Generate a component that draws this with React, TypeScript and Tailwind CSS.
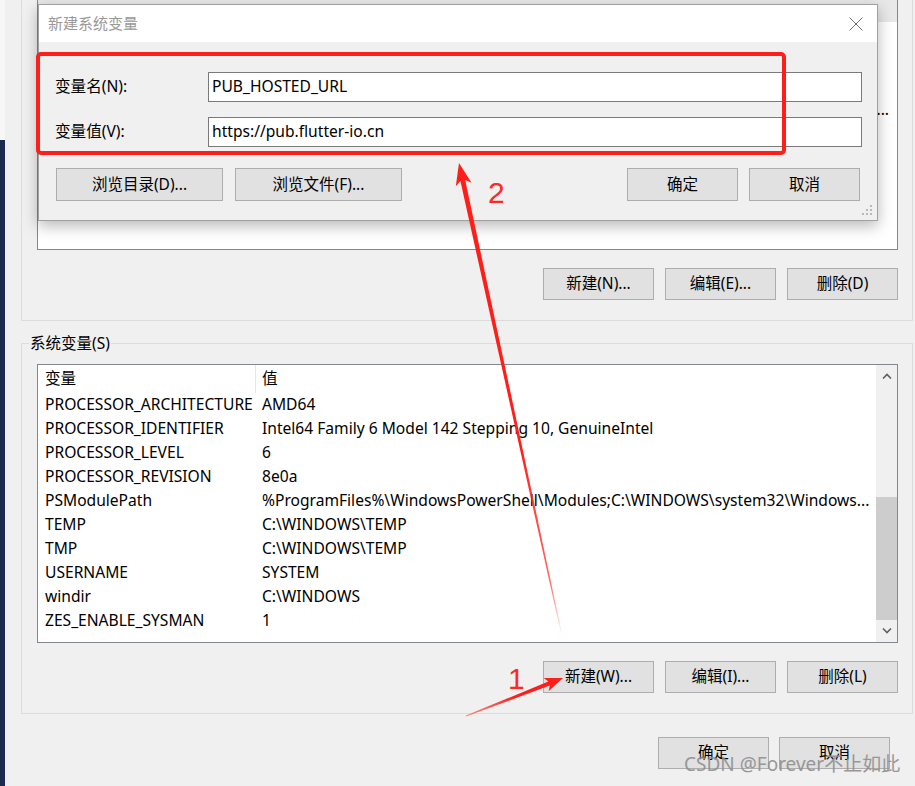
const rows: [string, string][] = [
  ["PROCESSOR_ARCHITECTURE", "AMD64"],
  ["PROCESSOR_IDENTIFIER", "Intel64 Family 6 Model 142 Stepping 10, GenuineIntel"],
  ["PROCESSOR_LEVEL", "6"],
  ["PROCESSOR_REVISION", "8e0a"],
  ["PSModulePath", "%ProgramFiles%\\WindowsPowerShell\\Modules;C:\\WINDOWS\\system32\\Windows..."],
  ["TEMP", "C:\\WINDOWS\\TEMP"],
  ["TMP", "C:\\WINDOWS\\TEMP"],
  ["USERNAME", "SYSTEM"],
  ["windir", "C:\\WINDOWS"],
  ["ZES_ENABLE_SYSMAN", "1"],
];

function WinButton({ label, className = "" }: { label: string; className?: string }) {
  return (
    <button
      type="button"
      className={`flex items-center justify-center border border-[#adadad] bg-[#e1e1e1] text-[15.5px] leading-none text-black ${className}`}
    >
      {label}
    </button>
  );
}

function Chevron({ up }: { up?: boolean }) {
  return (
    <svg width="10" height="6" viewBox="0 0 10 6" className="text-[#606060]">
      <path
        d={up ? "M1 5.5 L5 1.5 L9 5.5" : "M1 0.5 L5 4.5 L9 0.5"}
        fill="none"
        stroke="currentColor"
        strokeWidth="1.6"
      />
    </svg>
  );
}

function Annotations() {
  return (
    <svg
      className="pointer-events-none absolute left-0 top-0"
      width="915"
      height="786"
      viewBox="0 0 915 786"
    >
      <defs>
        <linearGradient id="fade2" x1="562" y1="636" x2="459" y2="163" gradientUnits="userSpaceOnUse">
          <stop offset="0" stopColor="#ff2a1f" stopOpacity="0" />
          <stop offset="0.12" stopColor="#ff2a1f" stopOpacity="0.7" />
          <stop offset="0.4" stopColor="#ff1f1a" stopOpacity="1" />
        </linearGradient>
        <linearGradient id="fade1" x1="466" y1="716" x2="563" y2="678" gradientUnits="userSpaceOnUse">
          <stop offset="0" stopColor="#ff2a1f" stopOpacity="0.5" />
          <stop offset="0.5" stopColor="#ff1f1a" stopOpacity="1" />
        </linearGradient>
      </defs>
      <rect x="38" y="54" width="746" height="99" rx="3" fill="none" stroke="#ff1f1a" strokeWidth="4" />
      <polygon
        points="459,163 471.5,182.8 465.2,180.1 562.5,635.9 561.5,636.1 460.4,181.1 455.8,186.2"
        fill="url(#fade2)"
      />
      <polygon
        points="563,678 548.8,691.1 549.7,685.4 466.2,716.5 465.8,715.5 548.3,681.6 543.7,678.1"
        fill="url(#fade1)"
      />
    </svg>
  );
}

export default function App() {
  return (
    <div className="relative flex h-[786px] w-[915px] overflow-hidden bg-[#f0f0f0] font-['Noto_Sans','Noto_Sans_CJK_SC',sans-serif] text-[15.6px] text-black">
      {/* desktop edge */}
      <div className="flex w-[5px] flex-col">
        <div className="h-[140px] bg-[#f7f7f7]" />
        <div className="flex-1 bg-[#1b2a4e]" />
      </div>

      <div className="flex flex-1 flex-col pl-[16px] pr-[2px]">
        {/* user variables */}
        <div className="flex h-[321px] flex-col border-x border-b border-[#dcdcdc] pl-[15px] pr-[14px]">
          <div className="flex h-[250px] flex-col border-x border-b border-[#828790] bg-white">
            <div className="h-[22px] bg-[#e8e8e8]" />
            <div className="mt-[76px] overflow-hidden whitespace-nowrap pr-[8px] text-right">
              %USERPROFILE%\AppData\Local\Microsoft\WindowsApps...
            </div>
          </div>
          <div className="mt-[18px] flex justify-end gap-[11px]">
            <WinButton label="新建(N)..." className="h-[32px] w-[111px]" />
            <WinButton label="编辑(E)..." className="h-[32px] w-[111px]" />
            <WinButton label="删除(D)" className="h-[32px] w-[111px]" />
          </div>
        </div>

        {/* system variables */}
        <fieldset className="mt-[12px] border border-[#dcdcdc] pb-[20px] pl-[15px] pr-[14px] pt-[11px]">
          <legend className="-ml-[8px] px-[1px] text-[15.5px] leading-[20px]">系统变量(S)</legend>
          <div className="flex h-[279px] border border-[#828790] bg-white">
            <div className="flex min-w-0 flex-1 flex-col">
              <div className="flex h-[28px] items-center">
                <div className="w-[217px] pl-[7px]">变量</div>
                <div className="h-full w-px bg-[#e5e5e5]" />
                <div className="pl-[6px]">值</div>
              </div>
              {rows.map(([name, value]) => (
                <div key={name} className="flex h-[24px] items-center">
                  <div className="w-[218px] shrink-0 whitespace-nowrap pl-[7px]">{name}</div>
                  <div className="min-w-0 flex-1 overflow-hidden whitespace-nowrap pl-[6px]">{value}</div>
                </div>
              ))}
            </div>
            <div className="flex w-[21px] flex-col bg-[#f0f0f0]">
              <div className="flex h-[21px] items-center justify-center">
                <Chevron up />
              </div>
              <div className="mt-[111px] h-[123px] bg-[#cdcdcd]" />
              <div className="flex flex-1 items-center justify-center">
                <Chevron />
              </div>
            </div>
          </div>
          <div className="mt-[18px] flex justify-end gap-[11px]">
            <WinButton label="新建(W)..." className="h-[32px] w-[111px]" />
            <WinButton label="编辑(I)..." className="h-[32px] w-[111px]" />
            <WinButton label="删除(L)" className="h-[32px] w-[111px]" />
          </div>
        </fieldset>

        <div className="mt-[23px] flex justify-end gap-[10px] pr-[23px]">
          <WinButton label="确定" className="h-[32px] w-[111px]" />
          <WinButton label="取消" className="h-[32px] w-[111px]" />
        </div>
      </div>

      {/* new system variable dialog */}
      <div className="absolute left-[38px] top-[4px] flex h-[217px] w-[840px] flex-col border border-[#a0a0a0] bg-[#f0f0f0] shadow-[0_5px_14px_rgba(0,0,0,0.28)]">
        <div className="flex h-[37px] items-center justify-between bg-white pl-[9px] pr-[14px]">
          <span className="text-[15px] text-[#999999]">新建系统变量</span>
          <svg width="14" height="14" viewBox="0 0 14 14">
            <path d="M0.5 0.5 L13.5 13.5 M13.5 0.5 L0.5 13.5" stroke="#6e6e6e" strokeWidth="1" />
          </svg>
        </div>
        <div className="relative flex flex-1 flex-col pl-[16px] pr-[15px] pt-[30px]">
          <div className="flex items-center">
            <div className="w-[153px]">变量名(N):</div>
            <div className="flex h-[30px] flex-1 items-center border border-[#7a7a7a] bg-white pl-[3px]">PUB_HOSTED_URL</div>
          </div>
          <div className="mt-[15px] flex items-center">
            <div className="w-[153px]">变量值(V):</div>
            <div className="flex h-[30px] flex-1 items-center border border-[#7a7a7a] bg-white pl-[3px]">https://pub.flutter-io.cn</div>
          </div>
          <div className="mt-[21px] flex pl-px pr-[2px]">
            <WinButton label="浏览目录(D)..." className="h-[33px] w-[167px]" />
            <WinButton label="浏览文件(F)..." className="ml-[12px] h-[33px] w-[167px]" />
            <div className="flex-1" />
            <WinButton label="确定" className="h-[33px] w-[111px]" />
            <WinButton label="取消" className="ml-[11px] h-[33px] w-[111px]" />
          </div>
          <svg className="absolute bottom-[3px] right-[3px]" width="12" height="12" viewBox="0 0 12 12">
            <g fill="#b9b9b9">
              <rect x="8" y="0" width="2" height="2" />
              <rect x="4" y="4" width="2" height="2" />
              <rect x="8" y="4" width="2" height="2" />
              <rect x="0" y="8" width="2" height="2" />
              <rect x="4" y="8" width="2" height="2" />
              <rect x="8" y="8" width="2" height="2" />
            </g>
          </svg>
        </div>
      </div>

      <Annotations />

      <div className="pointer-events-none absolute left-[488px] top-[178px] font-['Liberation_Sans',sans-serif] text-[30px] leading-none text-[#ff2a1f]">
        2
      </div>
      <div className="pointer-events-none absolute left-[508px] top-[664px] font-['Liberation_Sans',sans-serif] text-[30px] leading-none text-[#ff2a1f]">
        1
      </div>

      <div className="pointer-events-none absolute left-[684px] top-[752px] whitespace-nowrap text-[19px] leading-[24px] text-[#8f8f8f] opacity-90">
        CSDN @Forever不止如此
      </div>
    </div>
  );
}
